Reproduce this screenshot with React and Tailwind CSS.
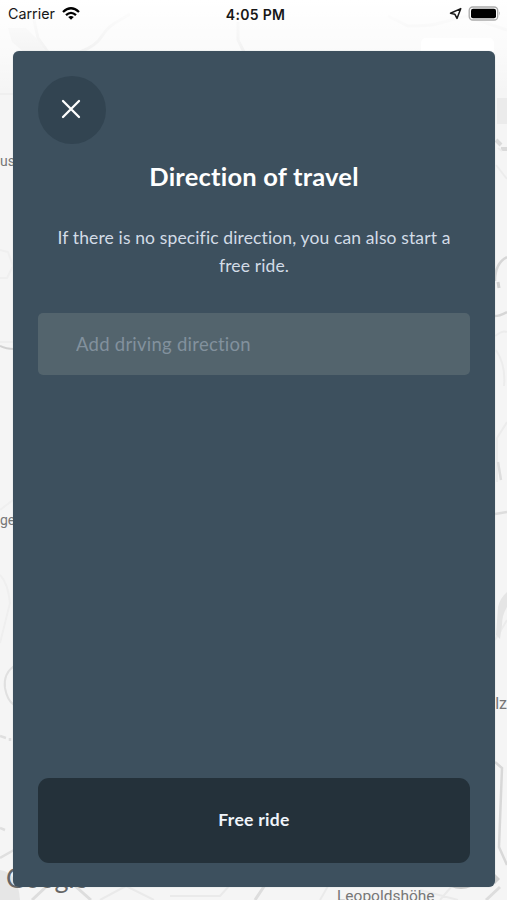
function MapBackground() {
  return (
    <svg className="absolute inset-0 h-full w-full" viewBox="0 0 507 900" fill="none" aria-hidden="true">
      <defs>
        <linearGradient id="statusFade" x1="0" y1="0" x2="0" y2="1">
          <stop offset="0" stopColor="#ffffff" />
          <stop offset="0.5" stopColor="#ffffff" stopOpacity="0.6" />
          <stop offset="1" stopColor="#ffffff" stopOpacity="0" />
        </linearGradient>
      </defs>
      <rect width="507" height="900" fill="#f5f5f5" />
      <path d="M8 28h18l12 12 8 12H24L12 42z" fill="#e8e8e8" />
      <path d="M34 20l4 18 10 14M80 52q16-6 22-16t18-16l10-6M238 22v18l6 12" stroke="#e2e2e2" strokeWidth="3" />
      <path d="M388 16l20 10q20 0 28-2l30-8 41 14" stroke="#e6e6e6" strokeWidth="3" />
      <path d="M497 98h10v26h-10z" fill="#ebebeb" />
      <path d="M496 140l5 5M501 149h6" stroke="#dadada" strokeWidth="4" />
      <path d="M0 94h14M0 250l8 2 5 14-6 12H0M0 575q8 8 10 28l-10 40M0 510l13-10M0 342h14" stroke="#efefef" strokeWidth="2" />
      <path d="M0 346q6 3 14 3" stroke="#d2d2d2" strokeWidth="2" />
      <path d="M14 666q-11 8-9 22 2 12 9 17" stroke="#e0e0e0" strokeWidth="2" />
      <path d="M0 736l6 2M10 738v3M0 828l5 2M0 858l14-8" stroke="#dfdfdf" strokeWidth="2.5" />
      <path d="M507 257q-12 6-12 24M495 316q4 0 12-4" stroke="#d6d6d6" strokeWidth="2.5" />
      <path d="M498 282l1 6" stroke="#cfcfcf" strokeWidth="3" />
      <path d="M498 148l4 3M496 165l11 14M495 336q8-6 12-4M496 350q10 15 8 36M507 422l-10 16v44M495 640l12-20" stroke="#ececec" strokeWidth="2" />
      <path d="M498 462l3 18M495 514l12-2" stroke="#dddddd" strokeWidth="2.5" />
      <path d="M507 592q-7 6-9 15l-2 28 4 4 2-14q0-10 5-18z" fill="#e5e5e5" />
      <path d="M495 762l7 6-3 79 8 18" stroke="#d8d8d8" strokeWidth="2.5" />
      <path d="M495 874l5 5-5 5z" fill="#cfcfcf" />
      <path d="M32 900l16-15M74 885l17 15M255 900l10-15M500 887l-14 13" stroke="#dddddd" strokeWidth="3" />
      <path d="M100 900l26-14 28 14M170 896h50l10-11M320 900l8-14M420 890l38 10M440 900l12-14" stroke="#eaeaea" strokeWidth="2" />
      <path d="M0 870q18 2 20 30H0z" fill="#e6e6e6" />
      <rect width="507" height="92" fill="url(#statusFade)" />
      <rect x="421" y="38" width="73" height="40" rx="5" fill="#ffffff" />
      <circle cx="461" cy="863" r="26" fill="#c9c9c9" />
    </svg>
  );
}

function MapLabels() {
  return (
    <div className="absolute inset-0 overflow-hidden font-['Roboto',sans-serif] text-[14px] leading-[16px] text-[#777]">
      <span className="absolute left-0 top-[153px]">us</span>
      <span className="absolute left-0 top-[512px]">ge</span>
      <span className="absolute right-0 top-[696px] text-[16px]">alz</span>
      <span className="absolute left-[337px] top-[888px] text-[15.5px]">Leopoldshöhe</span>
      <span className="absolute left-[6px] top-[862px] font-['Lato',sans-serif] text-[27px] leading-[32px] tracking-[-0.5px] text-[#666]">Google</span>
    </div>
  );
}

function StatusBar() {
  return (
    <header className="relative flex h-[28px] items-center justify-between pl-[8px] pr-[6px] font-['Inter',sans-serif] text-[14px] text-[#171717]">
      <div className="flex w-[160px] items-center gap-[7px]">
        <span className="text-[14.3px]">Carrier</span>
        <svg className="relative top-[-1px] h-[13px] w-[18px]" viewBox="0 0 18 13" fill="none" stroke="#000" strokeWidth="2.3">
          <path d="M1 5q8-7.4 16 0M4 8.1q5-4.5 10 0" />
          <path d="M6.2 10.1q2.8-2.2 5.6 0L9 12.8z" fill="#000" stroke="none" />
        </svg>
      </div>
      <span className="relative left-[1px] text-[14px] font-semibold tracking-[0.3px]">4:05 PM</span>
      <div className="flex w-[160px] items-center justify-end gap-[6px]">
        <svg className="relative top-[-1px] h-[13px] w-[13px]" viewBox="0 0 13 13" fill="none" stroke="#171717" strokeWidth="1.5" strokeLinejoin="round">
          <path d="M11.8 1.6L1.5 6.2l4.3 1 2.2 4.2z" />
        </svg>
        <svg className="relative top-[-1px] h-[15px] w-[33px]" viewBox="0 0 33 15" fill="none">
          <rect x="1.2" y="1" width="28.5" height="13" rx="3.5" stroke="#aaa" strokeWidth="1.3" />
          <rect x="3" y="2.8" width="25" height="9.4" rx="2" fill="#000" />
          <path d="M31.2 5.2q1.5 2.2 0 4.5z" fill="#999" />
        </svg>
      </div>
    </header>
  );
}

export default function App() {
  return (
    <div className="relative flex h-[900px] w-[507px] flex-col overflow-hidden">
      <MapBackground />
      <MapLabels />
      <StatusBar />
      <main className="relative ml-[13px] mr-[12.5px] mt-[23px] flex h-[836px] flex-col rounded-[6px] bg-[#3d505e] pb-[24px] pl-[25px] pr-[24.5px] pt-[25px] font-['Lato',sans-serif] shadow-[0_0_1px_0_rgba(140,155,165,0.7)]">
        <button className="flex size-[68px] items-center justify-center rounded-full bg-[#324451] pb-[2px] pr-[2px]" aria-label="Close">
          <svg className="size-[20px]" viewBox="0 0 20 20" stroke="#fff" strokeWidth="2.3" strokeLinecap="round">
            <path d="M2 2l16 16M18 2L2 18" />
          </svg>
        </button>
        <h1 className="mt-[16px] whitespace-nowrap text-center text-[25.5px] font-bold leading-[32px] tracking-[0.2px] text-white">Direction of travel</h1>
        <p className="mt-[32px] whitespace-nowrap text-center text-[17.5px] leading-[28px] tracking-[0.13px] text-[#d3dce7]">
          If there is no specific direction, you can also start a<br />free ride.
        </p>
        <input
          className="mt-[33px] h-[62px] w-full rounded-[5px] bg-[#53646d] pl-[38px] text-[18.5px] tracking-[0.25px] text-white outline-none placeholder:text-[#82919d]"
          placeholder="Add driving direction"
        />
        <button className="mt-auto h-[85px] w-full rounded-[11px] bg-[#24313a] text-[17.5px] font-bold tracking-[0.3px] text-[#f0f5fa]">Free ride</button>
      </main>
    </div>
  );
}
